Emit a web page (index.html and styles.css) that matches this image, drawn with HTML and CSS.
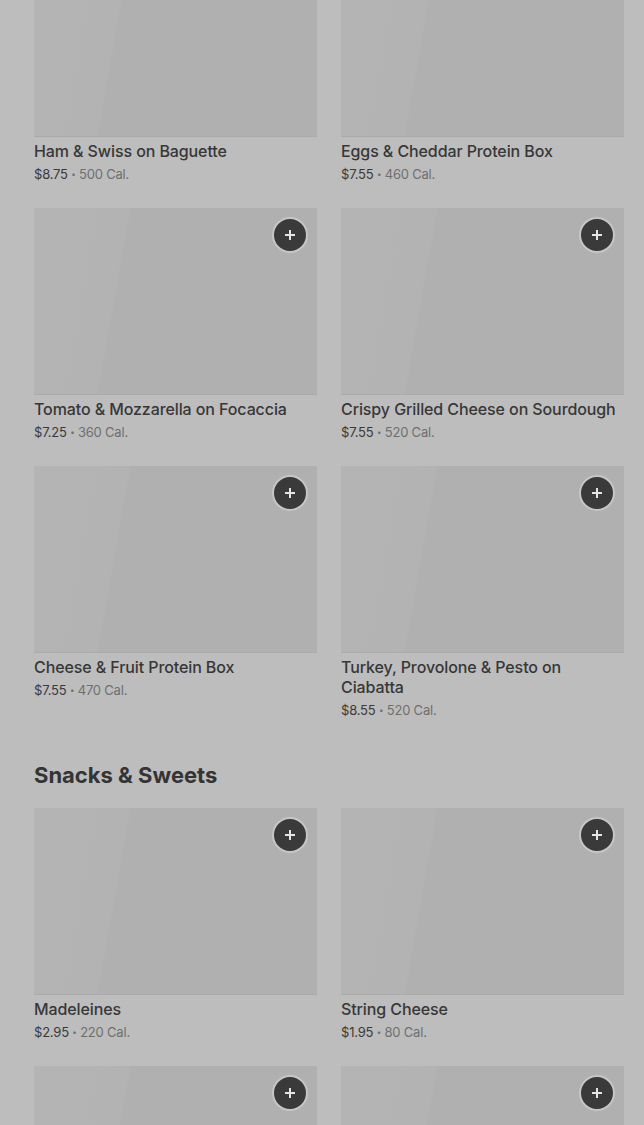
FILE: index.html
```html
<!DOCTYPE html>
<html>
<head>
<meta charset="utf-8">
<link rel="stylesheet" href="styles.css">
</head>
<body>
<main class="page">
  <section class="grid first">
    <article class="item">
      <div class="thumb"></div>
      <h3 class="name">Ham &amp; Swiss on Baguette</h3>
      <p class="meta"><span class="price">$8.75</span> <span class="dot">•</span> <span class="cal">500 Cal.</span></p>
    </article>
    <article class="item">
      <div class="thumb"></div>
      <h3 class="name">Eggs &amp; Cheddar Protein Box</h3>
      <p class="meta"><span class="price">$7.55</span> <span class="dot">•</span> <span class="cal">460 Cal.</span></p>
    </article>
    <article class="item">
      <div class="thumb"><button class="add"><svg viewBox="0 0 12 12" width="12" height="12"><path d="M6 1v10M1 6h10" stroke="#e4e4e4" stroke-width="2" fill="none"/></svg></button></div>
      <h3 class="name">Tomato &amp; Mozzarella on Focaccia</h3>
      <p class="meta"><span class="price">$7.25</span> <span class="dot">•</span> <span class="cal">360 Cal.</span></p>
    </article>
    <article class="item">
      <div class="thumb"><button class="add"><svg viewBox="0 0 12 12" width="12" height="12"><path d="M6 1v10M1 6h10" stroke="#e4e4e4" stroke-width="2" fill="none"/></svg></button></div>
      <h3 class="name">Crispy Grilled Cheese on Sourdough</h3>
      <p class="meta"><span class="price">$7.55</span> <span class="dot">•</span> <span class="cal">520 Cal.</span></p>
    </article>
    <article class="item">
      <div class="thumb"><button class="add"><svg viewBox="0 0 12 12" width="12" height="12"><path d="M6 1v10M1 6h10" stroke="#e4e4e4" stroke-width="2" fill="none"/></svg></button></div>
      <h3 class="name">Cheese &amp; Fruit Protein Box</h3>
      <p class="meta"><span class="price">$7.55</span> <span class="dot">•</span> <span class="cal">470 Cal.</span></p>
    </article>
    <article class="item">
      <div class="thumb"><button class="add"><svg viewBox="0 0 12 12" width="12" height="12"><path d="M6 1v10M1 6h10" stroke="#e4e4e4" stroke-width="2" fill="none"/></svg></button></div>
      <h3 class="name">Turkey, Provolone &amp; Pesto on Ciabatta</h3>
      <p class="meta"><span class="price">$8.55</span> <span class="dot">•</span> <span class="cal">520 Cal.</span></p>
    </article>
  </section>

  <h2 class="section-title">Snacks &amp; Sweets</h2>

  <section class="grid">
    <article class="item">
      <div class="thumb"><button class="add"><svg viewBox="0 0 12 12" width="12" height="12"><path d="M6 1v10M1 6h10" stroke="#e4e4e4" stroke-width="2" fill="none"/></svg></button></div>
      <h3 class="name">Madeleines</h3>
      <p class="meta"><span class="price">$2.95</span> <span class="dot">•</span> <span class="cal">220 Cal.</span></p>
    </article>
    <article class="item">
      <div class="thumb"><button class="add"><svg viewBox="0 0 12 12" width="12" height="12"><path d="M6 1v10M1 6h10" stroke="#e4e4e4" stroke-width="2" fill="none"/></svg></button></div>
      <h3 class="name">String Cheese</h3>
      <p class="meta"><span class="price">$1.95</span> <span class="dot">•</span> <span class="cal">80 Cal.</span></p>
    </article>
    <article class="item">
      <div class="thumb"><button class="add"><svg viewBox="0 0 12 12" width="12" height="12"><path d="M6 1v10M1 6h10" stroke="#e4e4e4" stroke-width="2" fill="none"/></svg></button></div>
    </article>
    <article class="item">
      <div class="thumb"><button class="add"><svg viewBox="0 0 12 12" width="12" height="12"><path d="M6 1v10M1 6h10" stroke="#e4e4e4" stroke-width="2" fill="none"/></svg></button></div>
    </article>
  </section>
</main>
</body>
</html>
```

FILE: styles.css
```css
html, body {
  margin: 0;
  padding: 0;
  background: #bdbdbd;
  overflow: hidden;
}

body {
  font-family: Inter, "Noto Sans", "Liberation Sans", sans-serif;
  color: #353535;
}

.page {
  padding: 0 20px 0 34px;
  margin-top: -50px;
}

.grid {
  display: grid;
  grid-template-columns: 283px 283px;
  column-gap: 24px;
  row-gap: 25px;
  align-items: start;
}

.item {
  display: flex;
  flex-direction: column;
}

.thumb {
  position: relative;
  height: 187px;
  background: linear-gradient(100deg, #b4b4b4 0%, #b3b3b3 30%, #b0b0b0 31%, #b0b0b0 100%);
  box-shadow: inset 0 -1px 0 #ababab;
}

.add {
  position: absolute;
  top: 9px;
  right: 9px;
  width: 36px;
  height: 36px;
  border-radius: 50%;
  border: 2px solid #c6c6c6;
  background: #3a3a3a;
  padding: 0;
  display: flex;
  align-items: center;
  justify-content: center;
  box-sizing: border-box;
}

.name {
  margin: 4px 0 0;
  font-size: 16px;
  line-height: 20px;
  font-weight: 500;
  color: #373737;
  letter-spacing: -0.1px;
}

.meta {
  margin: 4px 0 0;
  font-size: 13px;
  line-height: 18px;
  font-weight: 400;
  letter-spacing: -0.2px;
}

.price {
  color: #3a3a3a;
}

.dot {
  color: #6f6f6f;
  font-size: 8px;
  vertical-align: 2px;
}

.cal {
  color: #6f6f6f;
}

.section-title {
  margin: 42px 0 19px;
  font-size: 22px;
  line-height: 28px;
  font-weight: 700;
  letter-spacing: 0;
  color: #343434;
}
```
